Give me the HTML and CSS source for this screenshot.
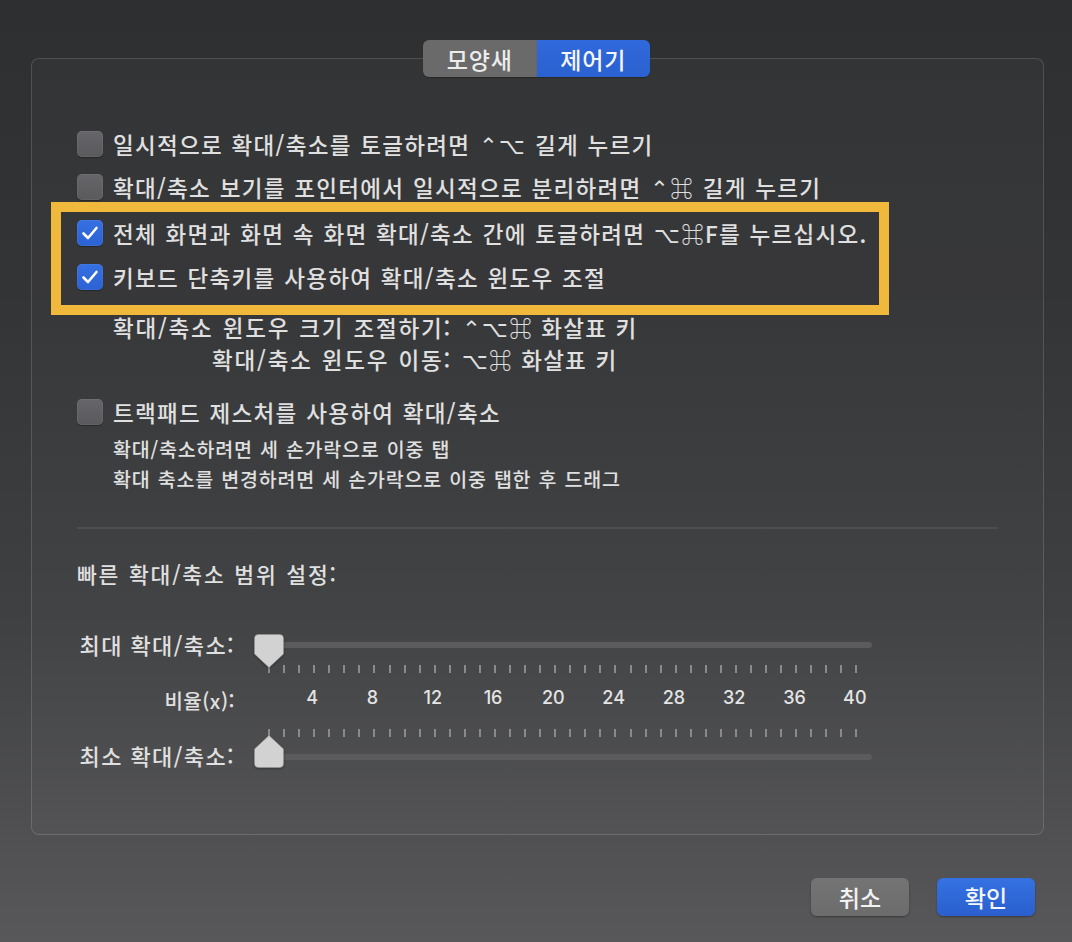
FILE: index.html
```html
<!DOCTYPE html>
<html lang="ko">
<head>
<meta charset="utf-8">
<title>손쉬운 사용 - 확대/축소 옵션</title>
<link rel="stylesheet" href="styles.css">
</head>
<body>
<div class="window">
  <div class="tabs">
    <span class="tab">모양새</span>
    <span class="tab tab-active">제어기</span>
  </div>
  <div class="panel">
    <div class="row">
      <span class="cb"></span>
      <span class="label">일시적으로 확대/축소를 토글하려면 ⌃⌥ 길게 누르기</span>
    </div>
    <div class="row">
      <span class="cb"></span>
      <span class="label">확대/축소 보기를 포인터에서 일시적으로 분리하려면 ⌃⌘ 길게 누르기</span>
    </div>
    <div class="highlight">
      <div class="row">
        <span class="cb cb-on"><svg viewBox="0 0 26 26" width="26" height="26"><path d="M6.5 13.5 L11 18 L19.5 8" fill="none" stroke="#fff" stroke-width="2.6" stroke-linecap="round" stroke-linejoin="round"/></svg></span>
        <span class="label">전체 화면과 화면 속 화면 확대/축소 간에 토글하려면 ⌥⌘F를 누르십시오.</span>
      </div>
      <div class="row row-gap">
        <span class="cb cb-on"><svg viewBox="0 0 26 26" width="26" height="26"><path d="M6.5 13.5 L11 18 L19.5 8" fill="none" stroke="#fff" stroke-width="2.6" stroke-linecap="round" stroke-linejoin="round"/></svg></span>
        <span class="label">키보드 단축키를 사용하여 확대/축소 윈도우 조절</span>
      </div>
    </div>
    <div class="keys">
      <span class="key-label">확대/축소 윈도우 크기 조절하기:</span>
      <span class="key-value">⌃⌥⌘ 화살표 키</span>
      <span class="key-label">확대/축소 윈도우 이동:</span>
      <span class="key-value">⌥⌘ 화살표 키</span>
    </div>
    <div class="row row-trackpad">
      <span class="cb"></span>
      <span class="label">트랙패드 제스처를 사용하여 확대/축소</span>
    </div>
    <div class="hints">
      <div>확대/축소하려면 세 손가락으로 이중 탭</div>
      <div>확대 축소를 변경하려면 세 손가락으로 이중 탭한 후 드래그</div>
    </div>
    <div class="sep"></div>
    <div class="range-title">빠른 확대/축소 범위 설정:</div>
    <div class="sliders">
      <span class="s-label s-label-top">최대 확대/축소:</span>
      <div class="slider slider-top">
        <div class="track"></div>
        <svg class="thumb thumb-down" viewBox="0 0 30 34" width="30" height="34"><path d="M4.5 0.5 H25.5 Q29.5 0.5 29.5 4.5 V20 L15 33.5 L0.5 20 V4.5 Q0.5 0.5 4.5 0.5 Z" fill="#d2d2d2" stroke="#9a9a9a" stroke-width="0.6"/></svg>
      </div>
      <span></span>
      <div class="ticks" id="ticks1"></div>
      <span class="s-label s-label-mid">비율(x):</span>
      <div class="nums">
        <span>4</span><span>8</span><span>12</span><span>16</span><span>20</span><span>24</span><span>28</span><span>32</span><span>36</span><span>40</span>
      </div>
      <span></span>
      <div class="ticks" id="ticks2"></div>
      <span class="s-label s-label-bot">최소 확대/축소:</span>
      <div class="slider slider-bot">
        <div class="track"></div>
        <svg class="thumb thumb-up" viewBox="0 0 30 33" width="30" height="33"><path d="M15 0.5 L29.5 14 V28.5 Q29.5 32.5 25.5 32.5 H4.5 Q0.5 32.5 0.5 28.5 V14 Z" fill="#d2d2d2" stroke="#9a9a9a" stroke-width="0.6"/></svg>
      </div>
    </div>
  </div>
  <div class="buttons">
    <span class="btn btn-cancel">취소</span>
    <span class="btn btn-ok">확인</span>
  </div>
</div>
<script>
  ['ticks1', 'ticks2'].forEach(function (id) {
    var el = document.getElementById(id);
    for (var i = 0; i < 40; i++) {
      var t = document.createElement('i');
      el.appendChild(t);
    }
  });
</script>
</body>
</html>
```
FILE: styles.css
```css
* { box-sizing: border-box; }
html, body {
  margin: 0;
  padding: 0;
}
body {
  width: 1072px;
  height: 942px;
  overflow: hidden;
  background: linear-gradient(180deg, #2e2f31 0%, #333436 30%, #3f4041 65%, #58585a 100%);
  font-family: "Noto Sans CJK KR", "DejaVu Sans", sans-serif;
  font-weight: 500;
  color: #e0e0e0;
}
.window {
  padding-top: 40px;
}
.tabs {
  position: relative;
  z-index: 2;
  display: flex;
  justify-content: center;
  margin-left: 1px;
}
.tab {
  width: 113.5px;
  height: 37px;
  display: flex;
  align-items: center;
  justify-content: center;
  font-size: 23px;
  color: #ececec;
  background: #6a6a6a;
  border-radius: 6px 0 0 6px;
  letter-spacing: 0.8px;
  box-shadow: 0 1px 1px rgba(0,0,0,0.25);
}
.tab-active {
  background: linear-gradient(180deg, #3069dc, #2b61d0);
  border-radius: 0 6px 6px 0;
  color: #f4f6fb;
}
.panel {
  margin: -19px 28px 0 31px;
  height: 777px;
  border: 1px solid rgba(255,255,255,0.14);
  border-radius: 8px;
  background: rgba(255,255,255,0.02);
  padding: 70px 45px 0 45px;
}
.row {
  display: flex;
  align-items: center;
  height: 30px;
  margin-bottom: 13px;
  font-size: 22.5px;
  letter-spacing: 1.3px;
  word-spacing: 1px;
  white-space: nowrap;
}
.cb {
  flex: none;
  width: 26px;
  height: 26px;
  border-radius: 5px;
  background: linear-gradient(180deg, #66666a, #5a5a5d);
  box-shadow: inset 0 0 0 0.5px rgba(255,255,255,0.12), 0 1px 1px rgba(0,0,0,0.3);
  margin-right: 10px;
}
.cb-on {
  background: linear-gradient(180deg, #3670e2, #2c62d3);
}
.cb-on svg { display: block; }
.highlight {
  margin: -13px 0 0 -26px;
  width: 838px;
  border: 10px solid #f0b93c;
  padding: 6px 0 0 16px;
  height: 113px;
}
.highlight .row { margin-bottom: 0; }
.highlight .row-gap { margin-top: 14px; }
.keys {
  display: grid;
  grid-template-columns: auto auto;
  justify-content: start;
  column-gap: 10px;
  row-gap: 8px;
  padding-left: 36px;
  margin-top: 0;
  font-size: 22.5px;
  line-height: 24px;
  letter-spacing: 1.8px;
  word-spacing: 1px;
  white-space: nowrap;
}
.key-label { text-align: right; }
.key-value { letter-spacing: 1.2px; }
.row-trackpad {
  margin-top: 26px;
  margin-bottom: 0;
}
.hints {
  padding-left: 36px;
  margin-top: 7px;
  font-size: 19.5px;
  line-height: 30px;
  letter-spacing: 0.8px;
  word-spacing: 1px;
  white-space: nowrap;
}
.sep {
  margin-top: 33px;
  height: 2px;
  background: #4e4e50;
}
.range-title {
  margin-top: 30px;
  font-size: 21.5px;
  line-height: 30px;
  letter-spacing: 1.8px;
  word-spacing: 1px;
}
.sliders {
  margin-top: 45px;
  display: grid;
  grid-template-columns: 158px 618px;
  column-gap: 19px;
}
.s-label {
  text-align: right;
  font-size: 22px;
  line-height: 20px;
  letter-spacing: 1.4px;
  white-space: nowrap;
}
.s-label-mid {
  font-size: 20px;
  letter-spacing: 0.5px;
  align-self: center;
}
.s-label-bot { padding-top: 8px; }
.slider {
  position: relative;
}
.slider-top { height: 31px; }
.slider-bot { height: 30px; }
.track {
  height: 6px;
  border-radius: 3px;
  background: #5b5b5d;
}
.slider-top .track { margin-top: 8px; }
.slider-bot .track { margin-top: 17px; }
.thumb {
  position: absolute;
  left: 0;
  filter: drop-shadow(0 1px 1px rgba(0,0,0,0.35));
}
.thumb-down { top: 0; }
.thumb-up { top: -2px; }
.ticks {
  display: flex;
  justify-content: space-between;
  padding: 0 14px;
  height: 8px;
}
.ticks i {
  display: block;
  width: 2px;
  height: 8px;
  background: #8a8a8c;
}
.nums {
  display: grid;
  grid-template-columns: repeat(10, 1fr);
  width: 603px;
  margin-left: 28px;
  padding: 13px 0 19px;
  font-family: "Inter", "Noto Sans", sans-serif;
  font-size: 18px;
  font-weight: 500;
  line-height: 24px;
  text-align: center;
  color: #e4e4e4;
}
.buttons {
  display: flex;
  justify-content: flex-end;
  gap: 28px;
  margin: 43px 37px 0 0;
}
.btn {
  width: 98px;
  height: 38px;
  border-radius: 6px;
  display: flex;
  align-items: center;
  justify-content: center;
  font-size: 23px;
  color: #f2f2f2;
  box-shadow: 0 1px 2px rgba(0,0,0,0.35);
}
.btn-cancel {
  background: linear-gradient(180deg, #747474, #6c6c6c);
}
.btn-ok {
  background: linear-gradient(180deg, #3572e2, #2a5fcd);
  color: #f5f7fc;
}
```
